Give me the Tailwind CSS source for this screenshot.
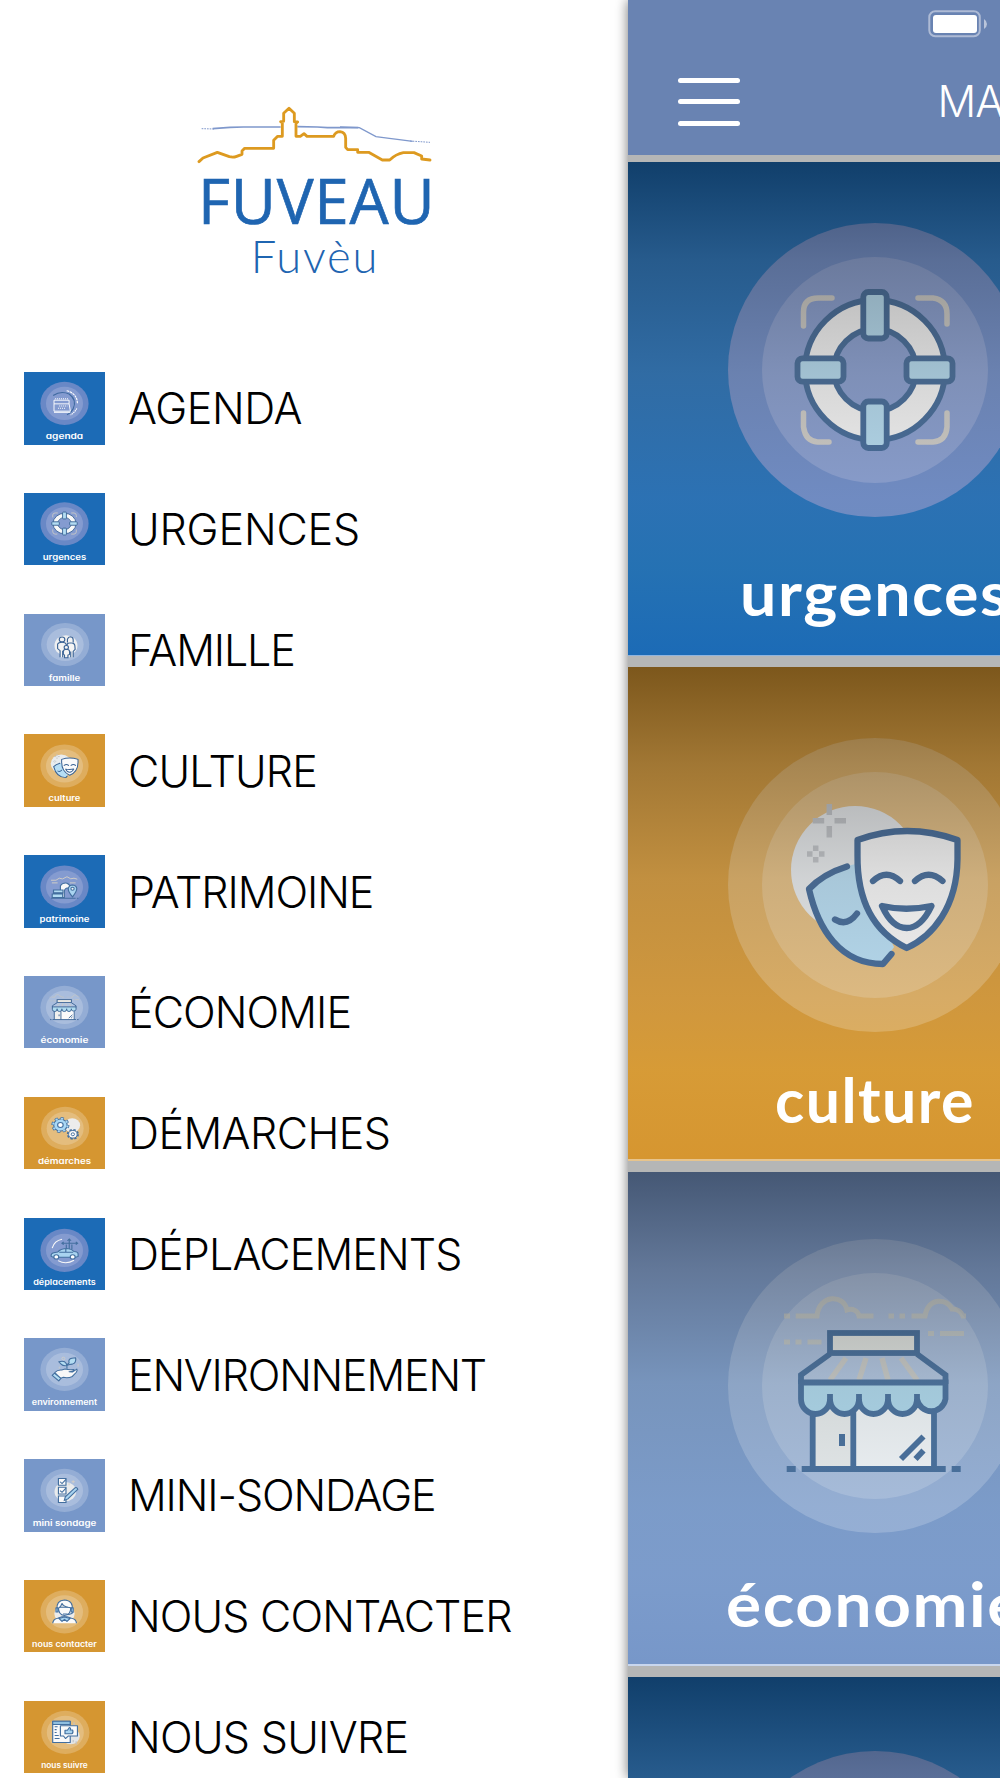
<!DOCTYPE html>
<html lang="fr">
<head>
    <meta charset="UTF-8">
    <meta name="viewport" content="width=device-width, initial-scale=1.0">
    <title>Fuveau</title>
    <script src="https://cdn.jsdelivr.net/npm/@tailwindcss/browser@4"></script>
</head>
<body class="w-[1000px] h-[1778px] flex overflow-hidden bg-white text-black font-['Inter','Liberation_Sans',sans-serif]">

    <!-- Shared icons, drawn on a 494x494 tile -->
    <svg class="hidden">
        <symbol id="rings-blue" viewBox="0 0 494 494">
            <circle cx="247" cy="210" r="147" fill="#6988c6"/>
            <circle cx="247" cy="210" r="113" fill="#849bd0"/>
        </symbol>
        <symbol id="rings-light" viewBox="0 0 494 494">
            <circle cx="247" cy="214" r="147" fill="#fff" fill-opacity=".22"/>
            <circle cx="247" cy="214" r="113" fill="#fff" fill-opacity=".2"/>
        </symbol>

        <symbol id="i-urgences" viewBox="0 0 494 494">
            <g fill="none" stroke="#cdcbc6" stroke-width="5.5" stroke-linecap="round">
                <path d="M175.5 164v-14q0-14 15-14H204"/>
                <path d="M290 136h15q14 2 14 16v10"/>
                <path d="M175.5 251v14q2 14 14 15H201"/>
                <path d="M319 251v14q-1 14-14 15h-15"/>
            </g>
            <circle cx="247" cy="208" r="55" fill="none" stroke="#f8f8f8" stroke-width="30"/>
            <g fill="none" stroke="#3a6394" stroke-width="5.8">
                <circle cx="247" cy="208" r="70"/>
                <circle cx="247" cy="208" r="41"/>
                <g fill="#b3dcf2">
                    <rect x="235.3" y="130" width="23.4" height="46.5" rx="5"/>
                    <rect x="235.3" y="239.5" width="23.4" height="46.5" rx="5"/>
                    <rect x="169.5" y="196.3" width="46" height="23.4" rx="5"/>
                    <rect x="278.5" y="196.3" width="46" height="23.4" rx="5"/>
                </g>
            </g>
        </symbol>

        <symbol id="i-culture" viewBox="0 0 494 494">
            <circle cx="227" cy="203" r="64" fill="#e9ecee"/>
            <g stroke="#c0c3c7" stroke-width="5.5">
                <path d="M201.3 137v11M201.3 159v11.5M184.7 153.7h11.5M206.5 153.7h11.5"/>
                <path d="M187.7 178.5v5.5M187.7 190v5.5M179 187h5.5M191 187h5.5"/>
            </g>
            <path fill="#b6def5" d="M228 197Q200 202 181 222C190 265 216 297 255 297L266 280Z"/>
            <g fill="none" stroke="#3a6394" stroke-width="6.3" stroke-linecap="round" stroke-linejoin="round">
                <path d="M219 199.5Q195 207 181 222C190 262 212 297 255 297L263.5 287"/>
                <path d="M207 252.5Q219 260 229 246.5"/>
                <path fill="#fafafa" d="M229.5 173Q279 155 329.5 173V192C329 240 305 269 278.7 281C250 267 229 240 229.5 188Z"/>
                <path d="M245 214Q258.5 201.5 272 214M287 214Q300.5 201.5 314.5 214"/>
                <path fill="#fff" d="M254 239Q278 244.5 303.5 239Q293 261 278.7 261Q264 261 254 239Z"/>
            </g>
        </symbol>

        <symbol id="i-economie" viewBox="0 0 494 494">
            <g fill="none" stroke="#d6cdb6" stroke-opacity=".6" stroke-width="5">
                <path d="M156 144h6M167.7 144H189C191 122 216 122 219 138C225 136 230 139 231 144H245.5"/>
                <path d="M260.5 144h5.5M271.5 144h5.5M283.5 144H297C300 125 319 126 324 137Q332 137 335 144H338"/>
                <path d="M156 170h6M167.5 170h6M179.5 170h14M300 161.5h6M312 161.5h24"/>
            </g>
            <path d="M202 184h87l28 20v6H173v-6Z" fill="#fff" fill-opacity=".12"/>
            <g fill="none" stroke="#cdcac4" stroke-width="5.5">
                <path d="M218 186 202 208M238 186l-7 22M254 186l6 22M273 186l16 22"/>
            </g>
            <path fill="#f0f0ee" d="M185 232h40v65h-40z"/>
            <path fill="#fbfbfb" d="M225 232h81v65h-81z"/>
            <g fill="none" stroke="#3a6394" stroke-width="5.8">
                <rect x="202" y="161" width="87" height="20" fill="#e8e8e2"/>
                <path fill="#b0dbef" d="M173 210.5V227a14.5 15 0 0 0 29 0a14.5 15 0 0 0 29 0a14.5 15 0 0 0 29 0a14.5 15 0 0 0 29 0a14.5 15 0 0 0 28.5 0V210.5Z"/>
                <path d="M202 222v8M231 222v8M260 222v8M289 222v8"/>
                <path d="M202 182 173 203v9M289 182l28.5 21v9"/>
                <path d="M184.7 240v57M306 240v57M225.3 240v57M173.7 297h144M158.7 297h9M323.7 297h9"/>
                <path stroke-width="6" d="M214 262v12"/>
                <path d="M273 287l22.5-22.5M287.5 287l8-8.5"/>
            </g>
        </symbol>
    </svg>

    <!-- Side menu -->
    <aside class="w-[628px] shrink-0 pt-[90px]">
        <svg class="ml-[180px] w-[270px] h-[200px]" viewBox="0 0 810 600">
            <g fill="none" stroke="#7f98cc">
                <path stroke-width="3" stroke-dasharray="5 3" d="M65 116l40 1M690 153l60 4"/>
                <path stroke-width="5" d="M98 116 150 112 190 111H302M352 110l60 1 30 2H535"/>
                <path stroke-width="4" d="M480 111l58 2 50 27 40 5 30 4 40 5"/>
            </g>
            <path fill="none" stroke="#dd9a20" stroke-width="8.5" stroke-linejoin="round" stroke-linecap="round" d="M57 215 69 204 112 187 148 200Q160 203 170 199L186 193V183L194 175H281V151L293 139H307V99L302 95 311 94V70L327 55 343 70V95L353 96 348 100V139H361L372 131 381 139H461Q466 125 480 125Q496 126 497 145V172L503 179H533V187H566L607 210H629Q648 192 670 188H702L725 198V207L750 210"/>
            <text x="54" y="401" textLength="710" lengthAdjust="spacing" class="font-['Open_Sans'] font-medium text-[186px] fill-[#1f65b1] stroke-[#1f65b1] stroke-2">FUVEAU</text>
            <text x="212" y="550" textLength="380" lengthAdjust="spacing" class="font-['Lato'] font-light text-[136px] fill-[#1f65b1]">Fuvèu</text>
        </svg>

        <ul class="mt-[82px] ml-6 text-[43px] font-light">
            <li class="h-[120.8px] flex items-start gap-[23px]">
                <svg class="w-[81px] h-[72.5px] shrink-0 bg-[#1c6bb6]" viewBox="0 0 494 494" preserveAspectRatio="none">
                    <use href="#rings-blue" y="4"/>
                    <g fill="none" stroke="#fff" stroke-width="7">
                        <path d="M260 128Q325 145 326 217" stroke-dasharray="16 4"/>
                        <path d="M322 248Q310 275 284 293" stroke-dasharray="10 4"/>
                        <path stroke="#3f6aa0" d="M178 160Q225 125 275 150Q325 190 300 250Q290 275 262 292"/>
                        <path stroke-width="6" d="M183 192h92v25h-92zM183 217v50h100l-8-50M183 275h100"/>
                        <path stroke-dasharray="6 6" d="M190 183h84M215 232h50M208 247h45"/>
                    </g>
                    <text x="247" y="456" text-anchor="middle" textLength="228" lengthAdjust="spacingAndGlyphs" class="font-['Inter'] font-semibold text-[56px] fill-white [font-feature-settings:'cv11']">agenda</text>
                </svg>
                <span class="leading-[73px] whitespace-nowrap tracking-[-0.4px]">AGENDA</span>
            </li>
            <li class="h-[120.8px] flex items-start gap-[23px]">
                <svg class="w-[81px] h-[72.5px] shrink-0 bg-[#1c6bb6]" viewBox="0 0 494 494" preserveAspectRatio="none">
                    <use href="#rings-blue"/>
                    <use href="#i-urgences"/>
                    <text x="247" y="454" text-anchor="middle" textLength="266" lengthAdjust="spacingAndGlyphs" class="font-['Inter'] font-semibold text-[56px] fill-white">urgences</text>
                </svg>
                <span class="leading-[73px] whitespace-nowrap tracking-[-0.15px]">URGENCES</span>
            </li>
            <li class="h-[120.8px] flex items-start gap-[23px]">
                <svg class="w-[81px] h-[72.5px] shrink-0 bg-[#7797c9]" viewBox="0 0 494 494" preserveAspectRatio="none">
                    <use href="#rings-light" x="4" y="-6"/>
                    <circle cx="256" cy="214" r="70" fill="#eeeff0"/>
                    <g fill="#f4f4f4" stroke="#3c6496" stroke-width="7">
                        <path d="M220 295V250L205 235V205Q210 192 232 192Q255 192 258 210V295M236 250v45"/>
                        <circle cx="232" cy="173" r="17"/>
                        <path d="M262 295V210Q265 195 283 195Q308 197 310 215L312 240L300 255V295M285 255v40"/>
                        <path d="M265 195V172Q270 155 283 155Q300 158 300 175V195"/>
                        <path d="M240 275V255Q240 240 258 240Q278 240 278 258V275L268 280V298H247V280Z"/>
                        <circle cx="258" cy="228" r="13"/>
                    </g>
                    <text x="247" y="454" text-anchor="middle" textLength="192" lengthAdjust="spacingAndGlyphs" class="font-['Inter'] font-semibold text-[56px] fill-white [font-feature-settings:'cv11']">famille</text>
                </svg>
                <span class="leading-[73px] whitespace-nowrap tracking-[-1.1px]">FAMILLE</span>
            </li>
            <li class="h-[120.8px] flex items-start gap-[23px]">
                <svg class="w-[81px] h-[72.5px] shrink-0 bg-[#d59631]" viewBox="0 0 494 494" preserveAspectRatio="none">
                    <use href="#rings-light" y="4"/>
                    <use href="#i-culture"/>
                    <text x="247" y="457" text-anchor="middle" textLength="194" lengthAdjust="spacingAndGlyphs" class="font-['Inter'] font-semibold text-[56px] fill-white">culture</text>
                </svg>
                <span class="leading-[74px] whitespace-nowrap tracking-[-0.85px]">CULTURE</span>
            </li>
            <li class="h-[120.8px] flex items-start gap-[23px]">
                <svg class="w-[81px] h-[72.5px] shrink-0 bg-[#1c6bb6]" viewBox="0 0 494 494" preserveAspectRatio="none">
                    <use href="#rings-blue" y="8"/>
                    <g fill="none" stroke="#d3cfc6" stroke-width="6">
                        <path d="M165 172H195L215 158 235 163 262 148 285 162 305 158 325 165M170 190h35M280 190h35"/>
                    </g>
                    <g stroke="#436f9f" stroke-width="7">
                        <path fill="#f8f8f8" d="M222 290V210Q235 188 262 192Q285 205 282 225H262Q245 230 246 255V290Z"/>
                        <path fill="#b3dcf2" d="M180 238h58v20h-58zM172 265h64v24h-64z"/>
                        <path fill="#a9d4f0" d="M296 285Q268 250 270 228Q275 205 297 205Q320 208 322 230Q320 252 296 285Z"/>
                        <circle cx="296" cy="230" r="10" fill="#f8f8f8"/>
                        <path d="M165 295h150M322 295h10"/>
                    </g>
                    <text x="247" y="457" text-anchor="middle" textLength="305" lengthAdjust="spacingAndGlyphs" class="font-['Inter'] font-semibold text-[56px] fill-white [font-feature-settings:'cv11']">patrimoine</text>
                </svg>
                <span class="leading-[74px] whitespace-nowrap tracking-[-1.05px]">PATRIMOINE</span>
            </li>
            <li class="h-[120.8px] flex items-start gap-[23px]">
                <svg class="w-[81px] h-[72.5px] shrink-0 bg-[#7797c9]" viewBox="0 0 494 494" preserveAspectRatio="none">
                    <use href="#rings-light"/>
                    <use href="#i-economie"/>
                    <text x="247" y="457" text-anchor="middle" textLength="292" lengthAdjust="spacingAndGlyphs" class="font-['Inter'] font-semibold text-[56px] fill-white">économie</text>
                </svg>
                <span class="leading-[73px] whitespace-nowrap tracking-[-0.9px]">ÉCONOMIE</span>
            </li>
            <li class="h-[120.8px] flex items-start gap-[23px]">
                <svg class="w-[81px] h-[72.5px] shrink-0 bg-[#d59631]" viewBox="0 0 494 494" preserveAspectRatio="none">
                    <use href="#rings-light" x="4"/>
                    <circle cx="294" cy="193" r="48" fill="#ececec"/>
                    <g stroke="#436f9f">
                        <circle cx="222" cy="191" r="48" fill="none" stroke-width="14" stroke-dasharray="20 17.7"/>
                        <circle cx="222" cy="191" r="41" fill="#a9d8f5" stroke-width="7"/>
                        <circle cx="222" cy="191" r="44" fill="none" stroke="#a9d8f5" stroke-width="12" stroke-dasharray="13 21.5" stroke-dashoffset="-3"/>
                        <circle cx="222" cy="191" r="17" fill="#fff" stroke-width="7"/>
                        <circle cx="298" cy="254" r="31" fill="none" stroke-width="12" stroke-dasharray="14 10.3"/>
                        <circle cx="298" cy="254" r="26" fill="#f8f8f8" stroke-width="6"/>
                        <circle cx="298" cy="254" r="10" fill="#fff" stroke-width="6"/>
                    </g>
                    <text x="247" y="454" text-anchor="middle" textLength="323" lengthAdjust="spacingAndGlyphs" class="font-['Inter'] font-semibold text-[56px] fill-white [font-feature-settings:'cv11']">démarches</text>
                </svg>
                <span class="leading-[73px] whitespace-nowrap tracking-[-0.55px]">DÉMARCHES</span>
            </li>
            <li class="h-[120.8px] flex items-start gap-[23px]">
                <svg class="w-[81px] h-[72.5px] shrink-0 bg-[#1c6bb6]" viewBox="0 0 494 494" preserveAspectRatio="none">
                    <use href="#rings-blue" y="11"/>
                    <path fill="none" stroke="#f8f8f8" stroke-width="7" d="M172 205Q185 155 232 145M208 290Q255 320 305 288"/>
                    <path fill="none" stroke="#436f9f" stroke-width="7" d="M276 215V145M265 155l11-12 11 12M276 172H325M316 162l11 10-11 10M276 172H235M242 162l-11 10 11 10M258 180v35M292 180v35"/>
                    <g fill="#a9d4f0" stroke="#436f9f" stroke-width="7">
                        <path d="M166 262Q162 240 182 236L205 232Q225 208 262 208Q290 210 305 228Q330 230 330 245V262L315 268H180Z"/>
                        <path fill="none" d="M215 233h85M255 212v20"/>
                        <circle cx="197" cy="265" r="15" fill="#fff"/>
                        <circle cx="297" cy="265" r="15" fill="#fff"/>
                    </g>
                    <text x="247" y="454" text-anchor="middle" textLength="382" lengthAdjust="spacingAndGlyphs" class="font-['Inter'] font-semibold text-[56px] fill-white [font-feature-settings:'cv11']">déplacements</text>
                </svg>
                <span class="leading-[73px] whitespace-nowrap tracking-[-0.85px]">DÉPLACEMENTS</span>
            </li>
            <li class="h-[120.8px] flex items-start gap-[23px]">
                <svg class="w-[81px] h-[72.5px] shrink-0 bg-[#7797c9]" viewBox="0 0 494 494" preserveAspectRatio="none">
                    <use href="#rings-light"/>
                    <circle cx="240" cy="140" r="9" fill="none" stroke="#d3cfc6" stroke-width="5"/>
                    <path fill="none" stroke="#d3cfc6" stroke-width="5" d="M330 175v20M215 195v14"/>
                    <g fill="#b3dcf2" stroke="#436f9f" stroke-width="7" stroke-linejoin="round">
                        <path d="M262 210V190Q262 178 275 170Q268 142 292 138L315 135Q320 170 295 178Q275 180 268 185"/>
                        <path d="M262 188Q238 192 228 180L212 162Q235 155 248 162Q260 172 262 188"/>
                        <path fill="#f8f8f8" d="M188 235Q205 215 230 218L250 212Q275 218 305 215Q305 228 275 230L295 232 322 212Q328 220 318 235L295 262Q270 275 240 268L222 275Z"/>
                        <path d="M185 240 172 255 212 292 225 275Z"/>
                    </g>
                    <text x="247" y="457" text-anchor="middle" textLength="398" lengthAdjust="spacingAndGlyphs" class="font-['Inter'] font-semibold text-[54px] fill-white">environnement</text>
                </svg>
                <span class="leading-[74px] whitespace-nowrap tracking-[-1.2px]">ENVIRONNEMENT</span>
            </li>
            <li class="h-[120.8px] flex items-start gap-[23px]">
                <svg class="w-[81px] h-[72.5px] shrink-0 bg-[#7797c9]" viewBox="0 0 494 494" preserveAspectRatio="none">
                    <use href="#rings-light"/>
                    <circle cx="252" cy="222" r="66" fill="#e9ebec"/>
                    <g stroke="#d3cfc6" stroke-width="6">
                        <path d="M300 145v20M290 155h20M275 165v14"/>
                    </g>
                    <g fill="#fafafa" stroke="#436f9f" stroke-width="7">
                        <path d="M210 133h46v46h-46zM210 193h46v46h-46zM210 252h46v44h-46z"/>
                        <path fill="none" d="M220 155l12 12 24-28M220 215l12 12 24-28"/>
                        <path fill="#a9d4f0" d="M246 282 252 258 312 196Q325 192 328 206L268 272Z"/>
                    </g>
                    <text x="247" y="454" text-anchor="middle" textLength="388" lengthAdjust="spacingAndGlyphs" class="font-['Inter'] font-semibold text-[54px] fill-white [font-feature-settings:'cv11']">mini sondage</text>
                </svg>
                <span class="leading-[73px] whitespace-nowrap tracking-[-1.1px]">MINI-SONDAGE</span>
            </li>
            <li class="h-[120.8px] flex items-start gap-[23px]">
                <svg class="w-[81px] h-[72.5px] shrink-0 bg-[#d59631]" viewBox="0 0 494 494" preserveAspectRatio="none">
                    <use href="#rings-light" y="3"/>
                    <circle cx="247" cy="230" r="62" fill="#ececec"/>
                    <g fill="#fafafa" stroke="#436f9f" stroke-width="7" stroke-linejoin="round">
                        <path d="M175 295Q178 265 205 260L232 250H262L290 260Q318 265 320 295"/>
                        <path d="M210 185Q208 235 247 242Q288 235 285 185Z"/>
                        <path d="M202 200Q195 140 247 137Q302 142 293 200Q285 185 270 185Q240 180 232 160Q225 185 210 192Z"/>
                        <path fill="#a9d4f0" d="M195 190h12v28h-12zM288 190h12v28h-12zM212 262 247 252 282 262 262 282 247 268 232 282Z"/>
                        <path fill="none" d="M300 218Q290 240 258 232H238"/>
                    </g>
                    <text x="247" y="454" text-anchor="middle" textLength="395" lengthAdjust="spacingAndGlyphs" class="font-['Inter'] font-semibold text-[54px] fill-white [font-feature-settings:'cv11']">nous contacter</text>
                </svg>
                <span class="leading-[73px] whitespace-nowrap tracking-[-0.85px]">NOUS CONTACTER</span>
            </li>
            <li class="h-[120.8px] flex items-start gap-[23px]">
                <svg class="w-[81px] h-[72.5px] shrink-0 bg-[#d59631]" viewBox="0 0 494 494" preserveAspectRatio="none">
                    <use href="#rings-light" x="5"/>
                    <circle cx="285" cy="240" r="55" fill="#e3e5e7"/>
                    <path stroke="#c0c3c7" stroke-width="7" d="M305 145v20M318 275v20M300 265v16"/>
                    <g fill="#fafafa" stroke="#436f9f" stroke-width="7" stroke-linejoin="round">
                        <path d="M175 138h107v145H175z"/>
                        <path fill="#8fbfe0" d="M175 138h107v22H175z"/>
                        <path fill="none" d="M187 175h18M187 195h12M187 215h12M187 235h25M187 255h30"/>
                        <path d="M222 168h104v70h-55l-18 18-12-18h-19z"/>
                        <path fill="#a9d4f0" d="M250 200h15l12-20q10 2 5 18h15q5 20-5 25h-42z"/>
                    </g>
                    <text x="247" y="454" text-anchor="middle" textLength="284" lengthAdjust="spacingAndGlyphs" class="font-['Inter'] font-semibold text-[54px] fill-white">nous suivre</text>
                </svg>
                <span class="leading-[73px] whitespace-nowrap tracking-[-0.7px]">NOUS SUIVRE</span>
            </li>
        </ul>
    </aside>

    <!-- Page pushed to the right -->
    <main class="flex-1 min-w-0 h-full overflow-hidden bg-[#b5b6b6] shadow-[0_0_12px_rgba(0,0,0,0.55)]">
        <header class="h-[155px] bg-[#6983b2] pt-2.5">
            <svg class="ml-[300px] w-[60px] h-[28px]" viewBox="0 0 60 28">
                <rect x="1.3" y="1.3" width="50.5" height="25" rx="6" fill="none" stroke="#aebbd5" stroke-width="2"/>
                <rect x="5" y="5" width="44" height="18" rx="3" fill="#fff"/>
                <path d="M56 9q3 2 3 5t-3 5z" fill="#b9c4da"/>
            </svg>
            <div class="mt-[37px] ml-[50px] flex items-center">
                <div class="w-[61.5px] h-[53px] shrink-0 flex flex-col justify-between py-[2.5px]">
                    <span class="h-[5px] rounded-full bg-white"></span>
                    <span class="h-[5px] rounded-full bg-white"></span>
                    <span class="h-[5px] rounded-full bg-white"></span>
                </div>
                <h1 class="ml-[198px] text-[43px] leading-none font-light text-white tracking-[-1px] whitespace-nowrap">MA</h1>
            </div>
        </header>

        <div class="mt-[7px] flex flex-col gap-[11px] w-[494px]">
            <section class="relative h-[494px] bg-[#1c6bb6] border-b border-[#8fb4de]">
                <svg class="block w-[494px] h-[494px]" viewBox="0 0 494 494">
                    <use href="#rings-blue" y="-2"/>
                    <use href="#i-urgences"/>
                </svg>
                <div class="absolute inset-0 bg-[linear-gradient(to_bottom,rgba(0,0,0,.41),rgba(60,60,60,.34)_20%,rgba(110,110,110,.25)_43%,rgba(160,160,160,.12)_68%,rgba(160,200,140,.07)_82%,rgba(255,255,255,0))]"></div>
                <svg class="absolute inset-0" viewBox="0 0 494 494">
                    <text x="112" y="454" textLength="270" lengthAdjust="spacingAndGlyphs" class="font-['Lato'] font-bold text-[62px] tracking-[1.5px] fill-white">urgences</text>
                </svg>
            </section>
            <section class="relative h-[494px] bg-[#d69630] border-b-2 border-[#e7c48c]">
                <svg class="block w-[494px] h-[494px]" viewBox="0 0 494 494">
                    <use href="#rings-light" y="4"/>
                    <use href="#i-culture"/>
                </svg>
                <div class="absolute inset-0 bg-[linear-gradient(to_bottom,rgba(0,0,0,.42),rgba(60,60,60,.34)_20%,rgba(120,120,120,.22)_43%,rgba(160,160,160,.12)_68%,rgba(220,190,100,.12)_82%,rgba(255,255,255,0))]"></div>
                <svg class="absolute inset-0" viewBox="0 0 494 494">
                    <text x="147" y="455.5" textLength="200" lengthAdjust="spacingAndGlyphs" class="font-['Lato'] font-bold text-[61px] tracking-[1.5px] fill-white">culture</text>
                </svg>
            </section>
            <section class="relative h-[494px] bg-[#7797c9] border-b-2 border-[#c8d6ee]">
                <svg class="block w-[494px] h-[494px]" viewBox="0 0 494 494">
                    <use href="#rings-light"/>
                    <use href="#i-economie"/>
                </svg>
                <div class="absolute inset-0 bg-[linear-gradient(to_bottom,rgba(0,0,0,.42),rgba(60,60,60,.34)_20%,rgba(120,140,150,.25)_43%,rgba(150,180,200,.15)_68%,rgba(160,190,220,.12)_82%,rgba(255,255,255,0))]"></div>
                <svg class="absolute inset-0" viewBox="0 0 494 494">
                    <text x="98" y="455" textLength="298" lengthAdjust="spacingAndGlyphs" class="font-['Lato'] font-bold text-[62px] tracking-[1.5px] fill-white">économie</text>
                </svg>
            </section>
            <section class="relative h-[494px] bg-[#1c6bb6]">
                <svg class="block w-[494px] h-[494px]" viewBox="0 0 494 494">
                    <use href="#rings-blue" y="11"/>
                </svg>
                <div class="absolute inset-0 bg-[linear-gradient(to_bottom,rgba(0,0,0,.41),rgba(60,60,60,.34)_20%,rgba(110,110,110,.25)_43%,rgba(160,160,160,.12)_68%,rgba(255,255,255,0))]"></div>
            </section>
        </div>
    </main>
</body>
</html>
